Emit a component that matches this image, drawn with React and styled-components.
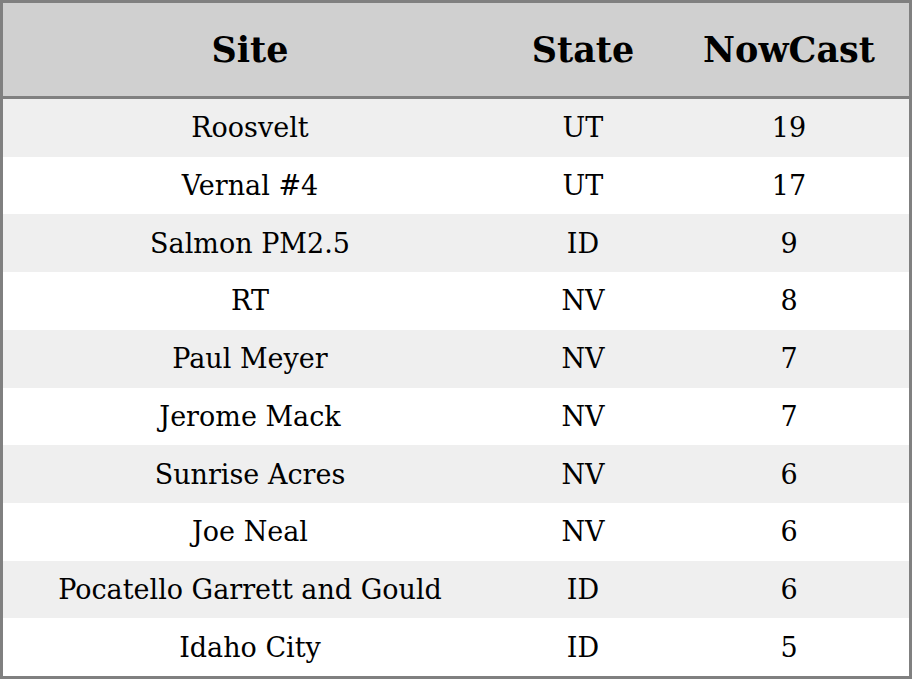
import React from "react";
import styled, { createGlobalStyle } from "styled-components";

const Global = createGlobalStyle`
  html, body { margin: 0; padding: 0; background: #ffffff; }
  body { font-family: "DejaVu Serif", serif; }
`;

const Frame = styled.div`
  width: 912px;
  height: 679px;
  box-sizing: border-box;
  border: 3px solid #808080;
  display: grid;
  grid-template-columns: 494px 172px 240px;
  grid-template-rows: 96px repeat(10, 1fr);
  background: #ffffff;
`;

const HeadCell = styled.div`
  background: #d0d0d0;
  border-bottom: 3px solid #808080;
  display: flex;
  align-items: center;
  justify-content: center;
  font-weight: bold;
  font-size: 35px;
  color: #000;
`;

const Cell = styled.div`
  background: ${(p) => (p.$shaded ? "#efefef" : "#ffffff")};
  display: flex;
  align-items: center;
  justify-content: center;
  font-size: 27px;
  color: #000;
`;

const rows = [
  ["Roosvelt", "UT", "19"],
  ["Vernal #4", "UT", "17"],
  ["Salmon PM2.5", "ID", "9"],
  ["RT", "NV", "8"],
  ["Paul Meyer", "NV", "7"],
  ["Jerome Mack", "NV", "7"],
  ["Sunrise Acres", "NV", "6"],
  ["Joe Neal", "NV", "6"],
  ["Pocatello Garrett and Gould", "ID", "6"],
  ["Idaho City", "ID", "5"],
];

export default function App() {
  return (
    <>
      <Global />
      <Frame>
        <HeadCell>Site</HeadCell>
        <HeadCell>State</HeadCell>
        <HeadCell>NowCast</HeadCell>
        {rows.map((r, i) =>
          r.map((v, j) => (
            <Cell key={`${i}-${j}`} $shaded={i % 2 === 0}>
              {v}
            </Cell>
          ))
        )}
      </Frame>
    </>
  );
}
